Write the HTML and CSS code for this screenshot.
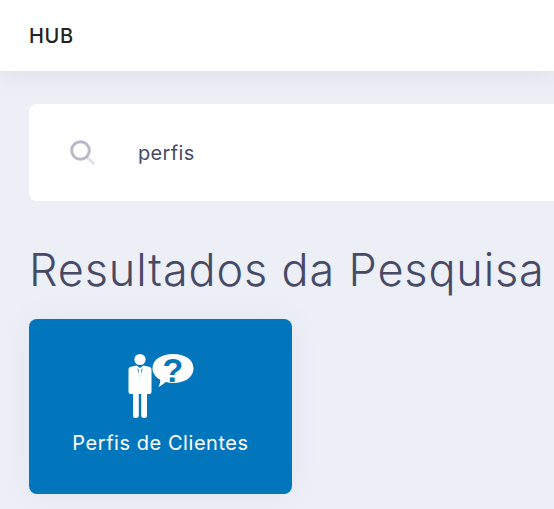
FILE: index.html
```html
<!DOCTYPE html>
<html lang="pt">
<head>
  <meta charset="UTF-8" />
  <title>HUB</title>
  <link rel="stylesheet" href="styles.css">
</head>
<body>
  <header class="topbar">
    <span class="brand">HUB</span>
  </header>

  <main class="content">
    <form class="search">
      <svg class="search-icon" width="26" height="26" viewBox="0 0 26 26" aria-hidden="true">
        <line x1="18" y1="18" x2="23.5" y2="23.5" stroke="#e3e3ea" stroke-width="3" stroke-linecap="round"/>
        <circle cx="10.5" cy="10.5" r="8.8" fill="none" stroke="#b9b9c7" stroke-width="3"/>
      </svg>
      <span class="search-text">perfis</span>
    </form>

    <h1 class="title">Resultados da Pesquisa</h1>

    <a class="tile" href="#">
      <svg class="tile-icon" width="68" height="72" viewBox="0 -6 68 72" aria-hidden="true">
        <circle cx="13" cy="6.5" r="5.6" fill="#fff"/>
        <path d="M3 14 L9.5 12.5 L13 15 L16.5 12.5 L23 14 Q24.5 14.5 24.5 16.5 V39 Q24.5 41 22.5 41 H20 V62.5 Q20 65 17.5 65 Q14.2 65 14.2 62.5 V41 H11.8 V62.5 Q11.8 65 8.5 65 Q6 65 6 62.5 V41 H3.5 Q1.5 41 1.5 39 V16.5 Q1.5 14.5 3 14 Z" fill="#fff"/>
        <path d="M10 15 L13 26 L16 15 L13.8 17 L14.5 22 L13 25 L11.5 22 L12.2 17 Z" fill="#0276bd" opacity="0.65"/>
        <path d="M46 1 C57.5 1 66.5 6.3 66.5 15.5 C66.5 24.5 57.5 30 46 30 C43.5 30 41 29.7 38.5 29 C36.5 30.8 34 33 31.5 34 C33 31 33.2 29 33.2 26.8 C28.5 24 25.5 20 25.5 15.5 C25.5 6.3 35 1 46 1 Z" fill="#fff"/>
        <text class="tile-mark" x="46" y="29" text-anchor="middle">?</text>
      </svg>
      <span class="tile-label">Perfis de Clientes</span>
    </a>
  </main>
</body>
</html>
```

FILE: styles.css
```css
* {
  box-sizing: border-box;
  margin: 0;
  padding: 0;
}

html, body {
  height: 100%;
  overflow: hidden;
}

body {
  font-family: 'Inter', 'Open Sans', sans-serif;
  background-color: #edeff7;
  color: #464a66;
}

.topbar {
  height: 71px;
  background-color: #fff;
  display: flex;
  align-items: center;
  padding-left: 29px;
  box-shadow: 0 4px 24px rgba(80, 85, 130, 0.1);
  position: relative;
}

.brand {
  font-size: 20px;
  font-weight: 500;
  letter-spacing: 0.6px;
  color: #222;
}

.content {
  padding: 33px 0 0 29px;
}

.search {
  height: 97px;
  background-color: #fff;
  border-radius: 8px 0 0 8px;
  display: flex;
  align-items: center;
  padding-left: 41px;
}

.search-icon {
  flex: none;
  margin-right: 42px;
}

.search-text {
  font-size: 20px;
  letter-spacing: 0.35px;
  color: #464a66;
}

.title {
  font-size: 45px;
  font-weight: 300;
  letter-spacing: 0.85px;
  line-height: 56px;
  margin-top: 41px;
  white-space: nowrap;
  color: #464a66;
}

.tile {
  display: flex;
  flex-direction: column;
  align-items: center;
  width: 263px;
  height: 175px;
  margin-top: 21px;
  padding-top: 28px;
  background-color: #0276bd;
  border-radius: 8px;
  color: #fff;
  text-decoration: none;
  box-shadow: 0 0 30px rgba(80, 85, 130, 0.06);
}

.tile-icon {
  display: block;
}

.tile-mark {
  font-family: 'Liberation Sans', sans-serif;
  font-size: 34px;
  font-weight: 700;
  fill: #0276bd;
}

.tile-label {
  font-size: 20px;
  letter-spacing: 0.55px;
  margin-top: 12px;
  white-space: nowrap;
}
```
